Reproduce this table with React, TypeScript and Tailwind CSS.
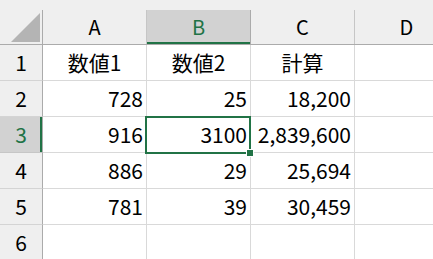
import React from 'react';

const cols = ['A', 'B', 'C', 'D'];

const rows = [
  ['数値1', '数値2', '計算', ''],
  ['728', '25', '18,200', ''],
  ['916', '3100', '2,839,600', ''],
  ['886', '29', '25,694', ''],
  ['781', '39', '30,459', ''],
  ['', '', '', ''],
];

const font = { fontFamily: '"Noto Sans CJK JP", "Noto Sans", sans-serif' };

export default function App() {
  return (
    <div className="relative w-[433px] h-[259px] overflow-hidden bg-white text-black" style={font}>
      {/* top strip above the column headers */}
      <div className="h-[10px] bg-[#efefef]" />

      {/* column headers */}
      <div className="flex h-[35px] bg-[#efefef] border-b border-[#ababab]">
        <div className="relative w-[43px] shrink-0 border-r border-[#ababab]">
          <svg className="absolute left-[11px] top-[3px]" width="29" height="29" viewBox="0 0 29 29">
            <polygon points="29,0 29,29 0,29" fill="#b4b4b4" />
          </svg>
        </div>
        {cols.map((c) => {
          const sel = c === 'B';
          return (
            <div
              key={c}
              className={`w-[104px] shrink-0 flex items-center justify-center text-[20px] border-r ${
                sel ? 'bg-[#d2d2d2] text-[#217346] border-[#ababab] shadow-[inset_0_-2px_0_#217346]' : 'border-[#c6c6c6]'
              }`}
            >
              {c}
            </div>
          );
        })}
      </div>

      {/* rows */}
      {rows.map((r, i) => {
        const sel = i === 2;
        return (
          <div key={i} className="flex h-[36px]">
            <div
              className={`w-[43px] shrink-0 flex items-center justify-center text-[21px] border-r border-b ${
                sel
                  ? 'bg-[#d2d2d2] text-[#217346] border-r-[#ababab] border-b-[#c6c6c6] shadow-[inset_-2px_0_0_#217346]'
                  : 'bg-[#efefef] border-r-[#ababab] border-b-[#d4d4d4]'
              }`}
            >
              {i + 1}
            </div>
            {r.map((v, j) => (
              <div
                key={j}
                className={`w-[104px] shrink-0 flex items-center text-[21px] border-r border-b border-[#d9d9d9] pt-[1px] ${
                  i === 0 ? 'justify-center' : 'justify-end pr-[3px]'
                }`}
              >
                {v}
              </div>
            ))}
          </div>
        );
      })}

      {/* active cell B3 */}
      <div className="absolute left-[145px] top-[116px] w-[106px] h-[38px] border-2 border-[#217346]" />
      <div className="absolute left-[246px] top-[149px] w-[8px] h-[8px] bg-[#217346] border border-white" />
    </div>
  );
}
